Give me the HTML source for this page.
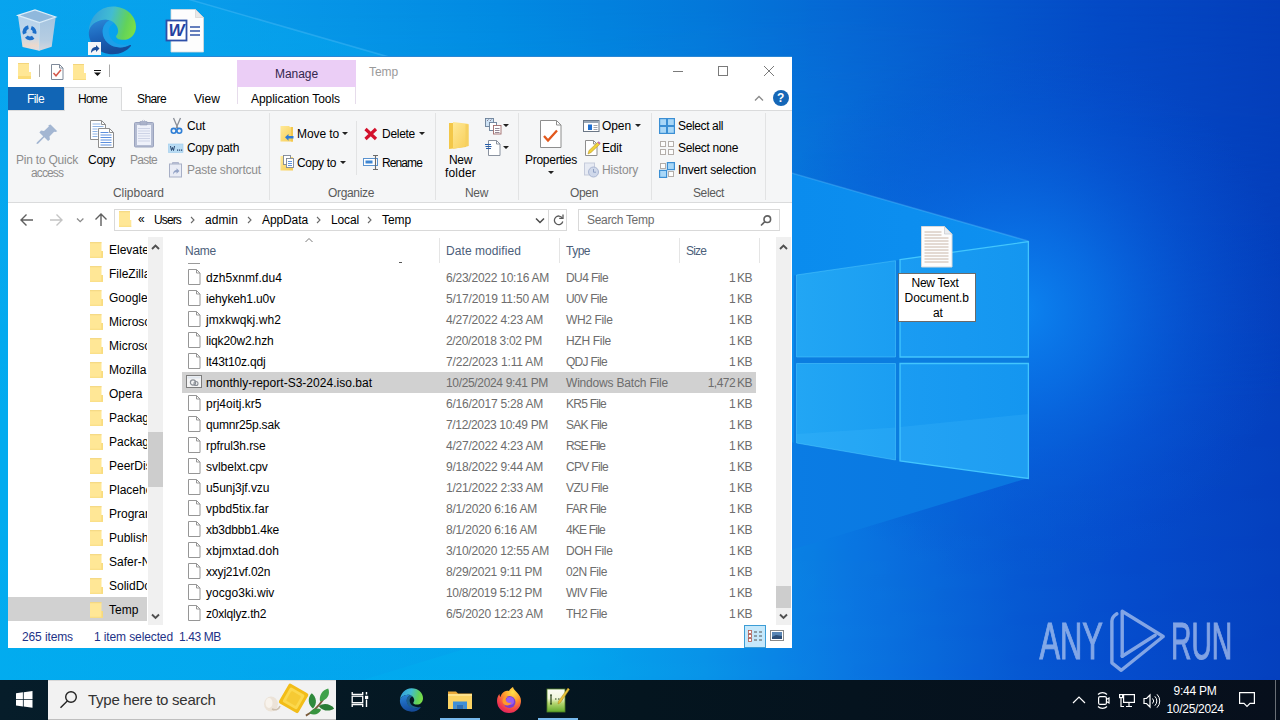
<!DOCTYPE html>
<html lang="en">
<head>
<meta charset="utf-8">
<title>Temp</title>
<style>
*{box-sizing:border-box;margin:0;padding:0}
html,body{width:1280px;height:720px;overflow:hidden}
body{font-family:"Liberation Sans",sans-serif;font-size:12px;color:#000;position:relative;background:#0a5fce}
.abs{position:absolute}
.t{position:absolute;white-space:pre;line-height:16px;height:16px}
#desk{position:absolute;left:0;top:0;width:1280px;height:720px}
#win{position:absolute;left:8px;top:57px;width:784px;height:591px;background:#fff;overflow:hidden}
#ribbon{position:absolute;left:0;top:53px;width:784px;height:93px;background:#f5f6f7;border-top:1px solid #dadbdc;border-bottom:1px solid #dadbdc}
.sep{position:absolute;width:1px;background:#e2e3e4;top:60px;height:81px}
.g{color:#8d8d8d}
.lbl{color:#5a5a5a}
#task{position:absolute;left:0;top:680px;width:1280px;height:40px;background:linear-gradient(90deg,#061d2a 0,#04151f 50%,#070f1c 100%)}
.row{position:absolute;left:174px;width:574px;height:21px}
.fi{position:absolute;left:6px;top:2px;width:13px;height:16px}
.nv{position:absolute;left:0;width:139px;height:24px;overflow:hidden}
</style>
</head>
<body>
<div id="desk">
<svg class="abs" style="left:0;top:0" width="1280" height="720" viewBox="0 0 1280 720">
<defs>
<linearGradient id="bg" x1="0" y1="0" x2="1280" y2="0" gradientUnits="userSpaceOnUse">
<stop offset="0" stop-color="#0aa0ee"/><stop offset=".16" stop-color="#0a9cea"/><stop offset=".39" stop-color="#028ae2"/><stop offset=".55" stop-color="#0478da"/><stop offset=".655" stop-color="#0668d4"/><stop offset=".78" stop-color="#0556cc"/><stop offset=".86" stop-color="#044ac6"/><stop offset="1" stop-color="#043eba"/>
</linearGradient>
<linearGradient id="bg2" x1="0" y1="0" x2="1280" y2="0" gradientUnits="userSpaceOnUse">
<stop offset="0" stop-color="#00aff0"/><stop offset=".43" stop-color="#02a8ee"/><stop offset=".55" stop-color="#0894e8"/><stop offset=".66" stop-color="#0a78e2"/><stop offset=".73" stop-color="#0868da"/><stop offset=".8" stop-color="#0658d2"/><stop offset=".88" stop-color="#054ccc"/><stop offset="1" stop-color="#0440be"/>
</linearGradient>
<linearGradient id="vm" x1="0" y1="0" x2="0" y2="720" gradientUnits="userSpaceOnUse">
<stop offset="0" stop-color="#fff" stop-opacity="0"/><stop offset=".1" stop-color="#fff" stop-opacity=".15"/><stop offset=".55" stop-color="#fff" stop-opacity=".9"/><stop offset="1" stop-color="#fff" stop-opacity="1"/>
</linearGradient>
<mask id="vmask"><rect width="1280" height="720" fill="url(#vm)"/></mask>
<linearGradient id="beam" x1="0" y1="0" x2="1280" y2="0" gradientUnits="userSpaceOnUse">
<stop offset="0" stop-color="#06a8ee" stop-opacity=".5"/><stop offset=".4" stop-color="#04a2ec" stop-opacity=".6"/><stop offset=".52" stop-color="#0698ea" stop-opacity=".9"/><stop offset=".62" stop-color="#0a8cee"/><stop offset=".8" stop-color="#0e90f0"/>
</linearGradient>
<linearGradient id="beam2" x1="0" y1="0" x2="1280" y2="0" gradientUnits="userSpaceOnUse">
<stop offset="0" stop-color="#04a8ee" stop-opacity=".5"/><stop offset=".4" stop-color="#04a0ec" stop-opacity=".6"/><stop offset=".52" stop-color="#0890e8" stop-opacity=".85"/><stop offset=".62" stop-color="#0a7ce4"/><stop offset=".8" stop-color="#0a76e0"/>
</linearGradient>
<radialGradient id="glow" cx="1020" cy="310" r="270" gradientUnits="userSpaceOnUse">
<stop offset="0" stop-color="#0c84f0" stop-opacity="1"/><stop offset=".3" stop-color="#0a74e8" stop-opacity=".75"/><stop offset=".65" stop-color="#0860dc" stop-opacity=".35"/><stop offset="1" stop-color="#0650d0" stop-opacity="0"/>
</radialGradient>
<linearGradient id="p1" x1="0" y1="0" x2="1" y2="0"><stop offset="0" stop-color="#22a6f4"/><stop offset="1" stop-color="#1b9ef2"/></linearGradient>
<linearGradient id="p2" x1="0" y1="0" x2="1" y2="0"><stop offset="0" stop-color="#1a9cf2"/><stop offset="1" stop-color="#1496f0"/></linearGradient>
</defs>
<rect width="1280" height="720" fill="url(#bg)"/>
<rect width="1280" height="720" fill="url(#bg2)" mask="url(#vmask)"/>
<rect x="600" width="680" height="720" fill="url(#glow)"/>
<polygon points="0,-55 1028,241 1028,478 0,323" fill="url(#beam)"/>
<polygon points="0,323 1028,478 0,790" fill="url(#beam2)"/>
<path d="M0-55L1028 241" stroke="#7fd4ff" stroke-opacity=".25" stroke-width="1.500"/>
<!-- panes -->
<polygon points="794,275.500 1029,241 1029,478.500 794,443" fill="#0b7de0"/>
<polygon points="796.500,275 895.500,260.700 895.500,357 796.500,357" fill="url(#p1)" stroke="#52ccff" stroke-width="1" stroke-opacity=".5"/>
<polygon points="900,259.600 1028.400,241.600 1028.400,357 900,357" fill="url(#p2)" stroke="#48ccff" stroke-width="1.300" stroke-opacity=".9"/>
<polygon points="796.500,363.500 895.500,363.500 895.500,460 796.500,443" fill="url(#p1)" stroke="#52ccff" stroke-width="1" stroke-opacity=".5"/>
<polygon points="900,363.500 1028.400,363.500 1028.400,478.500 900,461" fill="url(#p2)" stroke="#48ccff" stroke-width="1.300" stroke-opacity=".9"/>
<polygon points="796.500,434 895.500,427.500 895.500,460 796.500,443" fill="#4fc0ff" opacity=".18"/>
<polygon points="900,427 1028.400,414 1028.400,478.500 900,461" fill="#4fc0ff" opacity=".18"/>
</svg>

<!-- recycle bin -->
<svg class="abs" style="left:15px;top:7px" width="44" height="47" viewBox="15 7 44 47">
<defs><linearGradient id="rb1" x1="0" y1="0" x2="0" y2="1"><stop offset="0" stop-color="#b4d2ec"/><stop offset=".6" stop-color="#c4d8ea"/><stop offset=".85" stop-color="#ecd9cc"/><stop offset="1" stop-color="#d9dde6"/></linearGradient>
<linearGradient id="rb2" x1="0" y1="0" x2="0" y2="1"><stop offset="0" stop-color="#a4c4e0"/><stop offset=".7" stop-color="#b6cde2"/><stop offset="1" stop-color="#d6d6dc"/></linearGradient></defs>
<path d="M17.900 15.400L39.600 22.500l-.4 28.300L22.500 47z" fill="url(#rb1)"/>
<path d="M39.600 22.500L55.700 17l-4 29.700-12.500 4.100z" fill="url(#rb2)"/>
<path d="M17.900 15.400L35 10l20.700 7-16.100 5.500z" fill="#8fb8dc"/>
<path d="M17.900 15.400L35 10l20.700 7-16.100 5.500z" fill="none" stroke="#dcecf8" stroke-width="1.200"/>
<path d="M39.600 22.500l-.4 28.300" stroke="#dce8f4" stroke-width=".8" opacity=".8"/>
<g fill="none" stroke="#1c6fca" stroke-width="3.800"><path d="M24.800 33.800a4.800 4.800 0 0 1 3.600-6.600"/><path d="M31.200 27.800a4.800 4.800 0 0 1 3.200 5.800"/><path d="M33.200 37.200a4.800 4.800 0 0 1-6.800-.6"/></g>
</svg>
<!-- edge shortcut -->
<svg class="abs" style="left:88px;top:6px" width="49" height="49" viewBox="0 0 48.500 48.500">
<path d="M.8 26.500C.8 12 11 .5 24.500 .5 38 .5 47.500 10 47.500 20.500c0 7.500-5.500 13-12.500 13-5 0-7.200-2-7.200-3.300 0-1.200 2-2 2-5.700C29.800 19 24.500 13.500 17 13.500 8 13.500.8 20 .8 26.500z" fill="url(#eg1)"/>
<path d="M.8 26.500C.8 20 8 13.500 17 13.500c2 0 3.500.3 4.500.7-4 1.800-7 6.300-7 11.300C14.500 34 22 41 32 41c3.500 0 6.800-.8 9.500-2.400.8-.4 1.500.4 1 1.100-4 5.100-10.500 8.100-18 8.100C11 47.800.8 38 .8 26.500z" fill="url(#eg2)"/>
<path d="M14.500 25.500c0-5 3-9.500 7-11.300 1.500.6 3 1.600 4 2.800-3 1.500-5 4.500-5 8 0 7 6 13.500 15 13.500 2 0 4-.3 5.800-1-2.800 2.200-6 3.500-9.800 3.500-10 0-17-7-17-15.500z" fill="#2f9ce6" opacity=".55"/>
</svg>
<svg class="abs" style="left:88px;top:42px" width="13" height="13" viewBox="0 0 13 13"><rect width="13" height="13" fill="#f4f6f8"/><path d="M3 11c0-4 2-6 5-6V3l3.500 3.500L8 10V8c-2 0-3.500 1-5 3z" fill="#1c4f9c"/></svg>
<!-- word doc -->
<svg class="abs" style="left:165px;top:8px" width="41" height="46" viewBox="0 0 41 46">
<path d="M6 1.500h24.500l8 8V44H6z" fill="#fdfdfd" stroke="#d9d9d9" stroke-width=".8"/>
<path d="M30.500 1.500v8h8z" fill="#e8e8e8" stroke="#cfcfcf" stroke-width=".6"/>
<path d="M25 19h10M25 23h10M25 27h10" stroke="#3356a8" stroke-width="1.300"/>
<rect x="1.500" y="12.500" width="20" height="20" fill="#fff" stroke="#2d4fa8" stroke-width="1.800"/>
</svg>
<div class="t" style="left:167px;top:20px;width:19px;height:22px;line-height:22px;font-size:17px;font-weight:bold;font-style:italic;color:#2541a0;text-align:center">W</div>
<!-- new text document.bat -->
<svg class="abs" style="left:921px;top:226px" width="32" height="42" viewBox="0 0 32 42">
<path d="M.5.500h23l7.500 7.500v33H.5z" fill="#fdfdfd" stroke="#d5d9de" stroke-width="1"/>
<path d="M23.500.500v7.500h7.500z" fill="#e9ecef" stroke="#c9cdd2" stroke-width=".8"/>
<path d="M3.500 6h17M3.500 9h17M3.500 12h24M3.500 15h24M3.500 18h24M3.500 21h24M3.500 24h24M3.500 27h24M3.500 30h24M3.500 33h24M3.500 36h24" stroke="#c9b6a8" stroke-width="1"/>
</svg>
<div class="abs" style="left:898px;top:273px;width:78px;height:49px;background:#fff;border:1px solid #6a6a6a"></div>
<div class="t" style="letter-spacing:-0.268px;left:911.500px;top:275px;line-height:16px">New Text</div>
<div class="t" style="letter-spacing:-0.020px;left:904.500px;top:290px;line-height:16px">Document.b</div>
<div class="t" style="letter-spacing:-0.258px;left:933px;top:305px;line-height:16px">at</div>
<!-- watermark -->
<svg class="abs" style="left:1030px;top:600px" width="220" height="80" viewBox="0 0 220 80">
<g opacity=".62">
<g fill="#cfdcf6" stroke="#cfdcf6" stroke-width="1.100" font-family="'Liberation Sans',sans-serif" font-size="51">
<text transform="translate(9.500 59) scale(.605 1)">ANY</text>
<text transform="translate(141 59) scale(.555 1)">RUN</text>
</g>
<g fill="none" stroke="#cfdcf6" stroke-width="3.400" stroke-linejoin="round" stroke-linecap="round">
<path d="M92.200 56.200V11.300l41 25.200-41.900 33.800-9.400-7.500V21q0-4 5-7.200"/><path d="M92.200 56.200l33-21"/>
</g>
</g>
</svg>
</div>

<div id="wtop" class="abs" style="left:8px;top:56px;width:784px;height:1px;background:#2b86d4"></div>
<div id="win"><div id="wc" class="abs" style="left:-8px;top:-57px;width:1280px;height:720px">
<!-- title bar -->
<div class="abs" style="left:237px;top:60px;width:119px;height:27px;background:#ebcef6"></div>
<div class="t" style="letter-spacing:-0.062px;left:275px;top:66px;color:#33264d">Manage</div>
<div class="t" style="letter-spacing:-0.086px;left:369px;top:64px;color:#9a9a9a">Temp</div>
<svg class="abs" style="left:8px;top:57px" width="120" height="30" viewBox="8 57 120 30">
<path d="M18 63h11v9h2v7H18z" fill="#ffe796"/><path d="M18 63h11v1H18z" fill="#f3d57c"/><path d="M18 76h13v3H18z" fill="#fbdc78"/>
<path d="M39.500 64.500v12.500M109.500 64.500v12.500" stroke="#a8a8a8" stroke-width="1"/>
<path d="M51.500 64.500h8l3.500 3.500v11.500h-11.500z" fill="#fff" stroke="#7f8a9a"/><path d="M59.500 64.500v3.500h3.500" fill="none" stroke="#7f8a9a"/>
<path d="M53.500 73l2.500 2.800 5-6" stroke="#d4574a" stroke-width="1.500" fill="none"/>
<path d="M73 64h11v9h2v7H73z" fill="#ffe796"/><path d="M73 64h11v1H73z" fill="#f3d57c"/><path d="M73 79h13v1H73z" fill="#f9dc80"/>
<path d="M94 70.500h7" stroke="#111" stroke-width="1"/><path d="M94 72.500h7l-3.500 3.500z" fill="#111"/>
</svg>

<!-- window controls -->
<svg class="abs" style="left:660px;top:57px" width="132" height="30" viewBox="0 0 132 30" fill="none" stroke="#7a7a7a" stroke-width="1">
<path d="M13 14.500h10"/><rect x="58.500" y="9.500" width="9" height="9"/><path d="M104 9l10 10M114 9l-10 10"/>
</svg>
<!-- tabs -->
<div class="abs" style="left:8px;top:87px;width:56px;height:23px;background:#1165b5"></div>
<div class="t" style="letter-spacing:-0.586px;left:27px;top:91px;color:#fff">File</div>
<div class="abs" style="left:64px;top:87px;width:58px;height:24px;background:#f5f6f7;border:1px solid #dadbdc;border-bottom:none;z-index:3"></div>
<div class="t" style="letter-spacing:-0.754px;left:78px;top:91px;z-index:4">Home</div>
<div class="t" style="letter-spacing:-0.606px;left:137px;top:91px">Share</div>
<div class="t" style="letter-spacing:0.051px;left:194px;top:91px">View</div>
<div class="abs" style="left:237px;top:87px;width:119px;height:17px;border-left:1px solid #e6dceb;border-right:1px solid #e6dceb"></div>
<div class="t" style="letter-spacing:-0.050px;left:251px;top:91px">Application Tools</div>
<svg class="abs" style="left:752px;top:88px" width="40" height="20" viewBox="0 0 40 20">
<path d="M3 12.500l4-4 4 4" fill="none" stroke="#8a8a8a" stroke-width="1.300"/>
<circle cx="29" cy="10" r="8" fill="#1667b7"/>
</svg>
<div class="t" style="left:777px;top:90px;color:#fff;font-weight:bold;font-size:12px">?</div>
<div id="ribbon" style="left:8px;top:110px"></div>
<!-- ribbon group separators -->
<div class="sep" style="left:269px;top:113px;height:87px"></div>
<div class="sep" style="left:435px;top:113px;height:87px"></div>
<div class="sep" style="left:518px;top:113px;height:87px"></div>
<div class="sep" style="left:651px;top:113px;height:87px"></div>
<div class="sep" style="left:765px;top:113px;height:87px"></div>
<div class="sep" style="left:356px;top:121px;height:54px"></div>
<!-- group labels -->
<div class="t lbl" style="letter-spacing:-0.042px;left:113px;top:185px">Clipboard</div>
<div class="t lbl" style="letter-spacing:-0.338px;left:328px;top:185px">Organize</div>
<div class="t lbl" style="letter-spacing:-0.339px;left:465px;top:185px">New</div>
<div class="t lbl" style="letter-spacing:-0.340px;left:570px;top:185px">Open</div>
<div class="t lbl" style="letter-spacing:-0.393px;left:693px;top:185px">Select</div>
<!-- clipboard -->
<div class="t g" style="letter-spacing:-0.225px;left:16px;top:152px">Pin to Quick</div>
<div class="t g" style="letter-spacing:-0.893px;left:31px;top:165px">access</div>
<div class="t" style="letter-spacing:-0.254px;left:88px;top:152px">Copy</div>
<div class="t g" style="letter-spacing:-0.738px;left:130px;top:152px">Paste</div>
<div class="t" style="letter-spacing:-0.229px;left:187px;top:118px">Cut</div>
<div class="t" style="letter-spacing:-0.300px;left:187px;top:140px">Copy path</div>
<div class="t g" style="letter-spacing:-0.194px;left:187px;top:162px">Paste shortcut</div>
<!-- organize -->
<div class="t" style="letter-spacing:-0.098px;left:297px;top:126px">Move to</div>
<div class="t" style="letter-spacing:-0.337px;left:297px;top:155px">Copy to</div>
<div class="t" style="letter-spacing:-0.281px;left:382px;top:126px">Delete</div>
<div class="t" style="letter-spacing:-0.893px;left:382px;top:155px">Rename</div>
<!-- new -->
<div class="t" style="letter-spacing:-0.339px;left:449px;top:152px">New</div>
<div class="t" style="letter-spacing:0.161px;left:445px;top:165px">folder</div>
<!-- open -->
<div class="t" style="letter-spacing:-0.270px;left:525px;top:152px">Properties</div>
<div class="t" style="letter-spacing:-0.090px;left:602px;top:118px">Open</div>
<div class="t" style="letter-spacing:-0.172px;left:602px;top:140px">Edit</div>
<div class="t g" style="letter-spacing:-0.192px;left:602px;top:162px">History</div>
<!-- select -->
<div class="t" style="letter-spacing:-0.370px;left:678px;top:118px">Select all</div>
<div class="t" style="letter-spacing:-0.308px;left:678px;top:140px">Select none</div>
<div class="t" style="letter-spacing:-0.170px;left:678px;top:162px">Invert selection</div>
<!-- dropdown arrows -->
<svg class="abs" style="left:0;top:0" width="800" height="210" viewBox="0 0 800 210" fill="#222">
<path d="M342 132h6l-3 3zM340 161h6l-3 3zM419 132h6l-3 3zM503 124h6l-3 3zM503 146h6l-3 3zM548 171h6l-3 3zM635 124h6l-3 3z"/>
</svg>
<svg class="abs" style="left:0;top:0" width="800" height="210" viewBox="0 0 800 210">
<defs>
<linearGradient id="fo1" x1="0" y1="0" x2="1" y2="1"><stop offset="0" stop-color="#ffe998"/><stop offset="1" stop-color="#f7cd55"/></linearGradient>
</defs>
<!-- pin -->
<g fill="#a3b6d2"><path d="M50.500 124.500l6.800 6.800-2 .8-1.200-.4-4.600 4.800.4 3-1.800 1.600-3.800-3.800-6.300 6.400-1.500.3.300-1.500 6.400-6.300-3.800-3.800 1.600-1.800 3 .4 4.800-4.600-.4-1.200z"/></g>
<!-- copy -->
<g stroke="#8e8e8e" stroke-width="1" fill="#fff"><path d="M90.500 120.500h11l4 4v15h-15z"/><path d="M101.500 120.500v4h4" fill="none"/><path d="M98.500 128.500h11l4 4v15h-15z"/><path d="M109.500 128.500v4h4" fill="none"/></g>
<path d="M92.500 124h8M92.500 126.500h11M92.500 129h5M92.500 131.500h5M92.500 134h5M92.500 136.500h5" stroke="#8fb4e6" stroke-width="1"/>
<path d="M100.500 132.500h8M100.500 135h11M100.500 137.500h11M100.500 140h11M100.500 142.500h11M100.500 145h11" stroke="#5b8ede" stroke-width="1"/>
<!-- paste (disabled) -->
<rect x="134.500" y="122.500" width="19" height="24.500" rx="1" fill="#b4bcd2" stroke="#9aa3be"/>
<rect x="137" y="125" width="14" height="20" fill="#eef1fa"/>
<path d="M138 128.500h12M138 131h12M138 133.500h12M138 136h12M138 138.500h12M138 141h12" stroke="#cdd3e6" stroke-width="1"/>
<path d="M140 125v-3.500h1.800a1.900 2.300 0 0 1 3.400 0h1.800v3.500z" fill="#aab2ca" stroke="#949db8" stroke-width=".6"/><circle cx="143.500" cy="120.300" r=".8" fill="#f5f6f7"/>
<!-- cut -->
<path d="M173.500 118l4.500 10.500M180.500 118l-4.500 10.500" stroke="#8a8f98" stroke-width="1.300" fill="none"/>
<circle cx="173.700" cy="130.800" r="2.400" fill="none" stroke="#2f7fd6" stroke-width="1.600"/><circle cx="179.300" cy="130.800" r="2.400" fill="none" stroke="#2f7fd6" stroke-width="1.600"/>
<!-- copy path -->
<rect x="168.500" y="144" width="14.500" height="8.500" fill="#b9dcf4" stroke="#9ccbed" stroke-width=".6"/>
<path d="M170.500 146l1 4.500 1-3 1 3 1-4.500" stroke="#26456e" stroke-width="1" fill="none"/><path d="M177 150.200h1.200M179 150.200h1.200M181 150.200h1.200" stroke="#26456e" stroke-width="1.200"/>
<!-- paste shortcut (disabled) -->
<rect x="169.500" y="164" width="12" height="13" fill="#e9ecf5" stroke="#a7afc6"/><path d="M172.500 164v-1.500h6v1.500" fill="#b4bcd2" stroke="#a7afc6" stroke-width=".8"/>
<path d="M173 174.500c0-3 1.500-4.500 3.500-4.500v-1.800l3 2.800-3 2.800v-1.800c-1.500 0-2.500.8-3.500 2.500z" fill="#93a3c6"/>
<!-- move to -->
<path d="M280.500 126h9v1h3.500v14.500h-12.500z" fill="url(#fo1)"/><path d="M291 127h2v14.500h-2z" fill="#f3c84e"/>
<path d="M293.500 138.500h-5v2.200l-3.500-3.400 3.500-3.400v2.200h5z" fill="#2e7bd6"/>
<!-- copy to -->
<path d="M280.500 156h9v1h3.500v13.500h-12.500z" fill="url(#fo1)"/>
<g fill="#fff" stroke="#7d8694" stroke-width=".9"><rect x="283.500" y="155.500" width="7" height="9"/><rect x="286.500" y="158.500" width="7" height="9"/></g>
<path d="M288 161.500h4M288 163.500h4M288 165.500h4" stroke="#4e86d6" stroke-width=".9"/>
<!-- delete -->
<path d="M365.500 129l10.500 10M376 129l-10.500 10" stroke="#d3112c" stroke-width="3.200" fill="none"/>
<!-- rename -->
<rect x="363.500" y="158.500" width="14" height="7" fill="#fff" stroke="#5a93d0"/><rect x="365.500" y="160.500" width="7" height="3" fill="#3f86d2"/>
<path d="M375.500 155.500v14M373 155.500h5M373 169.500h5" stroke="#6a6a6a" stroke-width="1.100" fill="none"/>
<!-- new folder -->
<path d="M449 123h8l1.500 2.500H466V147l-17 2z" fill="#f3c748"/>
<path d="M453 122l12.500 1.500 3 .5V146l-15.500 3z" fill="url(#fo1)"/>
<path d="M465.500 124l3 .5V146l-3 .6z" fill="#f5d061"/>
<!-- new item -->
<g stroke="#6b7f98" stroke-width=".9"><rect x="485.500" y="118.500" width="8" height="8" fill="#cfe3f5"/><rect x="489.500" y="122.500" width="7" height="8" fill="#fff"/><rect x="493.500" y="125.500" width="7.500" height="8.500" fill="#fff" stroke="#a06a6a"/></g>
<path d="M487 121l1.500-1.500M490 121l1.500-1.500M495 128.500h4.500M495 130.500h4.500M495 132.500h4.500" stroke="#7a6a7a" stroke-width=".8"/>
<!-- easy access -->
<path d="M488.500 140.500h8l3.500 3.500v11.500h-11.500z" fill="#fff" stroke="#7d8694" stroke-width=".9"/><path d="M496.500 140.500v3.500h3.500" fill="none" stroke="#7d8694" stroke-width=".9"/>
<path d="M485 144.500h6M485.500 146.500h6M486 148.500h5" stroke="#2a5ea8" stroke-width="1.100"/>
<!-- properties -->
<path d="M540.500 120.500h16l4.500 4.500v22.500h-20.500z" fill="#fff" stroke="#8e8e8e"/><path d="M556.500 120.500v4.500h4.500" fill="none" stroke="#8e8e8e"/>
<path d="M544 136l4 4.500 9-10" stroke="#e2581c" stroke-width="2.300" fill="none"/>
<!-- open -->
<rect x="583.500" y="120.500" width="15.500" height="11" fill="#fff" stroke="#6b7786"/><rect x="584" y="121" width="14.500" height="2" fill="#9aa7b6"/>
<rect x="588" y="124.500" width="4" height="5.500" fill="#1e6fd0"/><path d="M593.500 125.500h4M593.500 127.500h4M593.500 129.500h4" stroke="#8a8f98" stroke-width=".8"/>
<!-- edit -->
<path d="M585.500 140.500h8l3.500 3.500v11.500h-11.500z" fill="#fff" stroke="#8e8e8e"/><path d="M593.500 140.500v3.500h3.500" fill="none" stroke="#8e8e8e"/>
<path d="M588 154l1-3.500 8.500-8 2 2-8.500 8z" fill="#f0d23a" stroke="#b8962a" stroke-width=".6"/><path d="M597.500 142.500l1.200-1.200 2 2-1.200 1.200z" fill="#c46ab0"/>
<!-- history (disabled) -->
<rect x="584.500" y="163" width="10" height="12" fill="#e6eaf3" stroke="#c5cbdb"/><circle cx="593.500" cy="172" r="5" fill="#cfd8ea" stroke="#aab6d2"/><path d="M593.500 169v3.200h2.500" stroke="#8fa0c4" stroke-width="1" fill="none"/>
<!-- select all -->
<g fill="#a9d7f7" stroke="#3b8fd4" stroke-width="1.200"><rect x="659.600" y="118.600" width="7" height="7"/><rect x="667.400" y="118.600" width="7" height="7"/><rect x="659.600" y="126.400" width="7" height="7"/><rect x="667.400" y="126.400" width="7" height="7"/></g>
<!-- select none -->
<g fill="#fdfdfd" stroke="#b3aeaa" stroke-width="1"><rect x="660.500" y="141.500" width="5" height="5"/><rect x="668.500" y="141.500" width="5" height="5"/><rect x="660.500" y="149.500" width="5" height="5"/><rect x="668.500" y="149.500" width="5" height="5"/></g>
<!-- invert -->
<g fill="#fdfdfd" stroke="#b3aeaa" stroke-width="1"><rect x="660.500" y="163.500" width="5" height="5"/><rect x="668.500" y="171.500" width="5" height="5"/></g>
<g fill="#a9d7f7" stroke="#3b8fd4" stroke-width="1.200"><rect x="667.400" y="162.600" width="7" height="7"/><rect x="659.600" y="170.400" width="7" height="7"/></g>
</svg>


<!-- nav buttons -->
<svg class="abs" style="left:8px;top:204px" width="110" height="32" viewBox="0 0 110 32" fill="none">
<path d="M25 16H13.500M18.500 10.500l-5.500 5.500 5.500 5.500" stroke="#5f5f5f" stroke-width="1.400"/>
<path d="M42 16h11.500M48.500 10.500l5.500 5.500-5.500 5.500" stroke="#c4c4c4" stroke-width="1.400"/>
<path d="M69 14.500l3.200 3.200 3.200-3.200" stroke="#8a8a8a" stroke-width="1.300"/>
<path d="M93 22V10.500M87.500 15.500l5.500-5.500 5.500 5.500" stroke="#5f5f5f" stroke-width="1.400"/>
</svg>
<div class="abs" style="left:114px;top:209px;width:435px;height:22px;border:1px solid #d9d9d9"></div>
<div class="abs" style="left:548px;top:209px;width:19px;height:22px;border:1px solid #d9d9d9"></div>
<div class="abs" style="left:578px;top:209px;width:202px;height:22px;border:1px solid #d9d9d9"></div>
<svg class="abs" style="left:118px;top:211px" width="14" height="16" viewBox="0 0 14 16"><path d="M1 .2h11v8.800h1.300v6.800H1z" fill="#ffe796"/><path d="M1 .2h11v1H1z" fill="#f3d57c"/><path d="M1 14.800h12.300v1H1z" fill="#f9dc80"/></svg>
<div class="t" style="left:138px;top:211px;font-size:12px;letter-spacing:-1px">«</div>
<div class="t" style="letter-spacing:-0.869px;left:154px;top:212px">Users</div>
<div class="t" style="letter-spacing:0.062px;left:205px;top:212px">admin</div>
<div class="t" style="letter-spacing:-0.100px;left:262px;top:212px">AppData</div>
<div class="t" style="letter-spacing:-0.138px;left:331px;top:212px">Local</div>
<div class="t" style="letter-spacing:-0.086px;left:382px;top:212px">Temp</div>
<svg class="abs" style="left:185px;top:214px" width="200" height="12" viewBox="0 0 200 12" fill="none" stroke="#6a6a6a" stroke-width="1.100">
<path d="M6 3l3 3-3 3M63 3l3 3-3 3M132 3l3 3-3 3M183 3l3 3-3 3"/>
</svg>
<svg class="abs" style="left:530px;top:210px" width="40" height="20" viewBox="0 0 40 20" fill="none">
<path d="M6 8.500l4 4 4-4" stroke="#4a4a4a" stroke-width="1.500"/>
<path d="M32.300 8a4.300 4.300 0 1 0 .5 3.500" stroke="#5a5a5a" stroke-width="1.300"/>
<path d="M33 4.500v3.800h-3.800" stroke="#5a5a5a" stroke-width="1.300"/>
</svg>
<div class="t" style="letter-spacing:-0.317px;left:587px;top:212px;color:#6d6d6d">Search Temp</div>
<svg class="abs" style="left:758px;top:213px" width="16" height="16" viewBox="0 0 16 16" fill="none" stroke="#606060" stroke-width="1.600"><circle cx="9.300" cy="6.200" r="3.300"/><path d="M7 8.500L3 12.500"/></svg>

<!-- nav pane -->
<div class="abs" style="left:8px;top:597px;width:139px;height:24px;background:#d1d1d1"></div>
<div class="abs" style="left:8px;top:237px;width:139px;height:388px;overflow:hidden">
<svg class="abs" style="left:81px;top:5px" width="14" height="16" viewBox="0 0 14 16"><path d="M1 .2h11.500v8.800h1.300v6.800H1z" fill="#ffe796"/><path d="M1 .2h11.500v1H1z" fill="#f3d57c"/><path d="M12.500 9h1.300v6.800h-1.300z" fill="#f7d875"/><path d="M1 14.800h12.800v1H1z" fill="#f9dc80"/></svg>
<div class="t" style="left:101px;top:5px">Elevate</div>
<svg class="abs" style="left:81px;top:29px" width="14" height="16" viewBox="0 0 14 16"><path d="M1 .2h11.500v8.800h1.300v6.800H1z" fill="#ffe796"/><path d="M1 .2h11.500v1H1z" fill="#f3d57c"/><path d="M12.500 9h1.300v6.800h-1.300z" fill="#f7d875"/><path d="M1 14.800h12.800v1H1z" fill="#f9dc80"/></svg>
<div class="t" style="left:101px;top:29px">FileZilla</div>
<svg class="abs" style="left:81px;top:53px" width="14" height="16" viewBox="0 0 14 16"><path d="M1 .2h11.500v8.800h1.300v6.800H1z" fill="#ffe796"/><path d="M1 .2h11.500v1H1z" fill="#f3d57c"/><path d="M12.500 9h1.300v6.800h-1.300z" fill="#f7d875"/><path d="M1 14.800h12.800v1H1z" fill="#f9dc80"/></svg>
<div class="t" style="left:101px;top:53px">Google</div>
<svg class="abs" style="left:81px;top:77px" width="14" height="16" viewBox="0 0 14 16"><path d="M1 .2h11.500v8.800h1.300v6.800H1z" fill="#ffe796"/><path d="M1 .2h11.500v1H1z" fill="#f3d57c"/><path d="M12.500 9h1.300v6.800h-1.300z" fill="#f7d875"/><path d="M1 14.800h12.800v1H1z" fill="#f9dc80"/></svg>
<div class="t" style="left:101px;top:77px">Microso</div>
<svg class="abs" style="left:81px;top:101px" width="14" height="16" viewBox="0 0 14 16"><path d="M1 .2h11.500v8.800h1.300v6.800H1z" fill="#ffe796"/><path d="M1 .2h11.500v1H1z" fill="#f3d57c"/><path d="M12.500 9h1.300v6.800h-1.300z" fill="#f7d875"/><path d="M1 14.800h12.800v1H1z" fill="#f9dc80"/></svg>
<div class="t" style="left:101px;top:101px">Microso</div>
<svg class="abs" style="left:81px;top:125px" width="14" height="16" viewBox="0 0 14 16"><path d="M1 .2h11.500v8.800h1.300v6.800H1z" fill="#ffe796"/><path d="M1 .2h11.500v1H1z" fill="#f3d57c"/><path d="M12.500 9h1.300v6.800h-1.300z" fill="#f7d875"/><path d="M1 14.800h12.800v1H1z" fill="#f9dc80"/></svg>
<div class="t" style="left:101px;top:125px">Mozilla</div>
<svg class="abs" style="left:81px;top:149px" width="14" height="16" viewBox="0 0 14 16"><path d="M1 .2h11.500v8.800h1.300v6.800H1z" fill="#ffe796"/><path d="M1 .2h11.500v1H1z" fill="#f3d57c"/><path d="M12.500 9h1.300v6.800h-1.300z" fill="#f7d875"/><path d="M1 14.800h12.800v1H1z" fill="#f9dc80"/></svg>
<div class="t" style="left:101px;top:149px">Opera</div>
<svg class="abs" style="left:81px;top:173px" width="14" height="16" viewBox="0 0 14 16"><path d="M1 .2h11.500v8.800h1.300v6.800H1z" fill="#ffe796"/><path d="M1 .2h11.500v1H1z" fill="#f3d57c"/><path d="M12.500 9h1.300v6.800h-1.300z" fill="#f7d875"/><path d="M1 14.800h12.800v1H1z" fill="#f9dc80"/></svg>
<div class="t" style="left:101px;top:173px">Packag</div>
<svg class="abs" style="left:81px;top:197px" width="14" height="16" viewBox="0 0 14 16"><path d="M1 .2h11.500v8.800h1.300v6.800H1z" fill="#ffe796"/><path d="M1 .2h11.500v1H1z" fill="#f3d57c"/><path d="M12.500 9h1.300v6.800h-1.300z" fill="#f7d875"/><path d="M1 14.800h12.800v1H1z" fill="#f9dc80"/></svg>
<div class="t" style="left:101px;top:197px">Packag</div>
<svg class="abs" style="left:81px;top:221px" width="14" height="16" viewBox="0 0 14 16"><path d="M1 .2h11.500v8.800h1.300v6.800H1z" fill="#ffe796"/><path d="M1 .2h11.500v1H1z" fill="#f3d57c"/><path d="M12.500 9h1.300v6.800h-1.300z" fill="#f7d875"/><path d="M1 14.800h12.800v1H1z" fill="#f9dc80"/></svg>
<div class="t" style="left:101px;top:221px">PeerDis</div>
<svg class="abs" style="left:81px;top:245px" width="14" height="16" viewBox="0 0 14 16"><path d="M1 .2h11.500v8.800h1.300v6.800H1z" fill="#ffe796"/><path d="M1 .2h11.500v1H1z" fill="#f3d57c"/><path d="M12.500 9h1.300v6.800h-1.300z" fill="#f7d875"/><path d="M1 14.800h12.800v1H1z" fill="#f9dc80"/></svg>
<div class="t" style="left:101px;top:245px">Placeho</div>
<svg class="abs" style="left:81px;top:269px" width="14" height="16" viewBox="0 0 14 16"><path d="M1 .2h11.500v8.800h1.300v6.800H1z" fill="#ffe796"/><path d="M1 .2h11.500v1H1z" fill="#f3d57c"/><path d="M12.500 9h1.300v6.800h-1.300z" fill="#f7d875"/><path d="M1 14.800h12.800v1H1z" fill="#f9dc80"/></svg>
<div class="t" style="left:101px;top:269px">Program</div>
<svg class="abs" style="left:81px;top:293px" width="14" height="16" viewBox="0 0 14 16"><path d="M1 .2h11.500v8.800h1.300v6.800H1z" fill="#ffe796"/><path d="M1 .2h11.500v1H1z" fill="#f3d57c"/><path d="M12.500 9h1.300v6.800h-1.300z" fill="#f7d875"/><path d="M1 14.800h12.800v1H1z" fill="#f9dc80"/></svg>
<div class="t" style="left:101px;top:293px">Publish</div>
<svg class="abs" style="left:81px;top:317px" width="14" height="16" viewBox="0 0 14 16"><path d="M1 .2h11.500v8.800h1.300v6.800H1z" fill="#ffe796"/><path d="M1 .2h11.500v1H1z" fill="#f3d57c"/><path d="M12.500 9h1.300v6.800h-1.300z" fill="#f7d875"/><path d="M1 14.800h12.800v1H1z" fill="#f9dc80"/></svg>
<div class="t" style="left:101px;top:317px">Safer-N</div>
<svg class="abs" style="left:81px;top:341px" width="14" height="16" viewBox="0 0 14 16"><path d="M1 .2h11.500v8.800h1.300v6.800H1z" fill="#ffe796"/><path d="M1 .2h11.500v1H1z" fill="#f3d57c"/><path d="M12.500 9h1.300v6.800h-1.300z" fill="#f7d875"/><path d="M1 14.800h12.800v1H1z" fill="#f9dc80"/></svg>
<div class="t" style="left:101px;top:341px">SolidDo</div>
<svg class="abs" style="left:81px;top:365px" width="14" height="16" viewBox="0 0 14 16"><path d="M1 .2h11.500v8.800h1.300v6.800H1z" fill="#ffe796"/><path d="M1 .2h11.500v1H1z" fill="#f3d57c"/><path d="M12.500 9h1.300v6.800h-1.300z" fill="#f7d875"/><path d="M1 14.800h12.800v1H1z" fill="#f9dc80"/></svg>
<div class="t" style="left:101px;top:365px">Temp</div>
</div>
<div class="abs" style="left:148px;top:237px;width:15px;height:388px;background:#f0f0f0"></div>
<div class="abs" style="left:148px;top:432px;width:15px;height:55px;background:#cdcdcd"></div>
<svg class="abs" style="left:148px;top:237px" width="15" height="388" viewBox="0 0 15 388" fill="none" stroke="#505050" stroke-width="1.900"><path d="M4 12l3.500-3.500 3.500 3.500M4 377.500l3.500 3.500 3.500-3.500"/></svg>

<!-- file list -->
<div class="t" style="letter-spacing:-0.254px;left:185px;top:243px;color:#4c607a">Name</div>
<div class="t" style="letter-spacing:0.073px;left:446px;top:243px;color:#4c607a">Date modified</div>
<div class="t" style="letter-spacing:-0.504px;left:566px;top:243px;color:#4c607a">Type</div>
<div class="t" style="letter-spacing:-0.836px;left:686px;top:243px;color:#4c607a">Size</div>
<div class="abs" style="left:439px;top:238px;width:1px;height:25px;background:#e5e5e5"></div>
<div class="abs" style="left:559px;top:238px;width:1px;height:25px;background:#e5e5e5"></div>
<div class="abs" style="left:679px;top:238px;width:1px;height:25px;background:#e5e5e5"></div>
<div class="abs" style="left:759px;top:238px;width:1px;height:25px;background:#e5e5e5"></div>
<svg class="abs" style="left:304px;top:237px" width="10" height="6" viewBox="0 0 10 6" fill="none" stroke="#7a7a7a" stroke-width="1"><path d="M1.500 5l3.500-3.500 3.500 3.500"/></svg>
<div class="abs" style="left:188px;top:263px;width:12px;height:1px;background:#9a9a9a"></div>
<div class="abs" style="left:399px;top:262px;width:3px;height:1px;background:#555"></div>
<div class="abs" style="left:182px;top:372px;width:574px;height:21px;background:#d1d1d1"></div>
<svg class="abs" style="left:188px;top:269px" width="13" height="16" viewBox="0 0 13 16"><path d="M.5.500h8l3.500 3.500v11.500H.5z" fill="#fff" stroke="#969696"/><path d="M8.500.500v3.500h3.500" fill="none" stroke="#969696"/></svg>
<div class="t" style="letter-spacing:0.051px;left:206px;top:270px">dzh5xnmf.du4</div>
<div class="t" style="letter-spacing:-0.246px;left:446px;top:270px;color:#6d6d6d">6/23/2022 10:16 AM</div>
<div class="t" style="letter-spacing:-0.586px;left:566px;top:270px;color:#6d6d6d">DU4 File</div>
<div class="t" style="left:652px;width:100px;text-align:right;letter-spacing:-.5px;word-spacing:-1px;top:270px;color:#6d6d6d">1 KB</div>
<svg class="abs" style="left:188px;top:290px" width="13" height="16" viewBox="0 0 13 16"><path d="M.5.500h8l3.500 3.500v11.500H.5z" fill="#fff" stroke="#969696"/><path d="M8.500.500v3.500h3.500" fill="none" stroke="#969696"/></svg>
<div class="t" style="letter-spacing:-0.143px;left:206px;top:291px">iehykeh1.u0v</div>
<div class="t" style="letter-spacing:-0.196px;left:446px;top:291px;color:#6d6d6d">5/17/2019 11:50 AM</div>
<div class="t" style="letter-spacing:-0.627px;left:566px;top:291px;color:#6d6d6d">U0V File</div>
<div class="t" style="left:652px;width:100px;text-align:right;letter-spacing:-.5px;word-spacing:-1px;top:291px;color:#6d6d6d">1 KB</div>
<svg class="abs" style="left:188px;top:311px" width="13" height="16" viewBox="0 0 13 16"><path d="M.5.500h8l3.500 3.500v11.500H.5z" fill="#fff" stroke="#969696"/><path d="M8.500.500v3.500h3.500" fill="none" stroke="#969696"/></svg>
<div class="t" style="letter-spacing:0.082px;left:206px;top:312px">jmxkwqkj.wh2</div>
<div class="t" style="letter-spacing:-0.221px;left:446px;top:312px;color:#6d6d6d">4/27/2022 4:23 AM</div>
<div class="t" style="letter-spacing:-0.355px;left:566px;top:312px;color:#6d6d6d">WH2 File</div>
<div class="t" style="left:652px;width:100px;text-align:right;letter-spacing:-.5px;word-spacing:-1px;top:312px;color:#6d6d6d">1 KB</div>
<svg class="abs" style="left:188px;top:332px" width="13" height="16" viewBox="0 0 13 16"><path d="M.5.500h8l3.500 3.500v11.500H.5z" fill="#fff" stroke="#969696"/><path d="M8.500.500v3.500h3.500" fill="none" stroke="#969696"/></svg>
<div class="t" style="letter-spacing:-0.156px;left:206px;top:333px">liqk20w2.hzh</div>
<div class="t" style="letter-spacing:-0.319px;left:446px;top:333px;color:#6d6d6d">2/20/2018 3:02 PM</div>
<div class="t" style="letter-spacing:-0.293px;left:566px;top:333px;color:#6d6d6d">HZH File</div>
<div class="t" style="left:652px;width:100px;text-align:right;letter-spacing:-.5px;word-spacing:-1px;top:333px;color:#6d6d6d">1 KB</div>
<svg class="abs" style="left:188px;top:353px" width="13" height="16" viewBox="0 0 13 16"><path d="M.5.500h8l3.500 3.500v11.500H.5z" fill="#fff" stroke="#969696"/><path d="M8.500.500v3.500h3.500" fill="none" stroke="#969696"/></svg>
<div class="t" style="letter-spacing:-0.158px;left:206px;top:354px">lt43t10z.qdj</div>
<div class="t" style="letter-spacing:-0.168px;left:446px;top:354px;color:#6d6d6d">7/22/2023 1:11 AM</div>
<div class="t" style="letter-spacing:-0.709px;left:566px;top:354px;color:#6d6d6d">QDJ File</div>
<div class="t" style="left:652px;width:100px;text-align:right;letter-spacing:-.5px;word-spacing:-1px;top:354px;color:#6d6d6d">1 KB</div>
<svg class="abs" style="left:186px;top:375px" width="16" height="14" viewBox="0 0 16 14"><rect x=".5" y=".5" width="15" height="12" fill="#f4f4f4" stroke="#7d7d7d"/><rect x="1.500" y="1.500" width="13" height="2" fill="#dfe6ee"/><circle cx="7" cy="7.500" r="2.600" fill="none" stroke="#8a8f96" stroke-width="1.200"/><circle cx="10" cy="8.500" r="2" fill="none" stroke="#8a8f96" stroke-width="1.100"/></svg>
<div class="t" style="letter-spacing:0.019px;left:206px;top:375px">monthly-report-S3-2024.iso.bat</div>
<div class="t" style="letter-spacing:-0.339px;left:446px;top:375px;color:#6d6d6d">10/25/2024 9:41 PM</div>
<div class="t" style="letter-spacing:-0.188px;left:566px;top:375px;color:#6d6d6d">Windows Batch File</div>
<div class="t" style="left:652px;width:100px;text-align:right;letter-spacing:-.5px;word-spacing:-1px;top:375px;color:#6d6d6d">1,472 KB</div>
<svg class="abs" style="left:188px;top:395px" width="13" height="16" viewBox="0 0 13 16"><path d="M.5.500h8l3.500 3.500v11.500H.5z" fill="#fff" stroke="#969696"/><path d="M8.500.500v3.500h3.500" fill="none" stroke="#969696"/></svg>
<div class="t" style="letter-spacing:0.012px;left:206px;top:396px">prj4oitj.kr5</div>
<div class="t" style="letter-spacing:-0.221px;left:446px;top:396px;color:#6d6d6d">6/16/2017 5:28 AM</div>
<div class="t" style="letter-spacing:-0.752px;left:566px;top:396px;color:#6d6d6d">KR5 File</div>
<div class="t" style="left:652px;width:100px;text-align:right;letter-spacing:-.5px;word-spacing:-1px;top:396px;color:#6d6d6d">1 KB</div>
<svg class="abs" style="left:188px;top:416px" width="13" height="16" viewBox="0 0 13 16"><path d="M.5.500h8l3.500 3.500v11.500H.5z" fill="#fff" stroke="#969696"/><path d="M8.500.500v3.500h3.500" fill="none" stroke="#969696"/></svg>
<div class="t" style="letter-spacing:-0.196px;left:206px;top:417px">qumnr25p.sak</div>
<div class="t" style="letter-spacing:-0.339px;left:446px;top:417px;color:#6d6d6d">7/12/2023 10:49 PM</div>
<div class="t" style="letter-spacing:-0.711px;left:566px;top:417px;color:#6d6d6d">SAK File</div>
<div class="t" style="left:652px;width:100px;text-align:right;letter-spacing:-.5px;word-spacing:-1px;top:417px;color:#6d6d6d">1 KB</div>
<svg class="abs" style="left:188px;top:437px" width="13" height="16" viewBox="0 0 13 16"><path d="M.5.500h8l3.500 3.500v11.500H.5z" fill="#fff" stroke="#969696"/><path d="M8.500.500v3.500h3.500" fill="none" stroke="#969696"/></svg>
<div class="t" style="letter-spacing:-0.092px;left:206px;top:438px">rpfrul3h.rse</div>
<div class="t" style="letter-spacing:-0.221px;left:446px;top:438px;color:#6d6d6d">4/27/2022 4:23 AM</div>
<div class="t" style="letter-spacing:-1.043px;left:566px;top:438px;color:#6d6d6d">RSE File</div>
<div class="t" style="left:652px;width:100px;text-align:right;letter-spacing:-.5px;word-spacing:-1px;top:438px;color:#6d6d6d">1 KB</div>
<svg class="abs" style="left:188px;top:458px" width="13" height="16" viewBox="0 0 13 16"><path d="M.5.500h8l3.500 3.500v11.500H.5z" fill="#fff" stroke="#969696"/><path d="M8.500.500v3.500h3.500" fill="none" stroke="#969696"/></svg>
<div class="t" style="letter-spacing:-0.019px;left:206px;top:459px">svlbelxt.cpv</div>
<div class="t" style="letter-spacing:-0.221px;left:446px;top:459px;color:#6d6d6d">9/18/2022 9:44 AM</div>
<div class="t" style="letter-spacing:-0.668px;left:566px;top:459px;color:#6d6d6d">CPV File</div>
<div class="t" style="left:652px;width:100px;text-align:right;letter-spacing:-.5px;word-spacing:-1px;top:459px;color:#6d6d6d">1 KB</div>
<svg class="abs" style="left:188px;top:479px" width="13" height="16" viewBox="0 0 13 16"><path d="M.5.500h8l3.500 3.500v11.500H.5z" fill="#fff" stroke="#969696"/><path d="M8.500.500v3.500h3.500" fill="none" stroke="#969696"/></svg>
<div class="t" style="letter-spacing:-0.054px;left:206px;top:480px">u5unj3jf.vzu</div>
<div class="t" style="letter-spacing:-0.221px;left:446px;top:480px;color:#6d6d6d">1/21/2022 2:33 AM</div>
<div class="t" style="letter-spacing:-0.584px;left:566px;top:480px;color:#6d6d6d">VZU File</div>
<div class="t" style="left:652px;width:100px;text-align:right;letter-spacing:-.5px;word-spacing:-1px;top:480px;color:#6d6d6d">1 KB</div>
<svg class="abs" style="left:188px;top:500px" width="13" height="16" viewBox="0 0 13 16"><path d="M.5.500h8l3.500 3.500v11.500H.5z" fill="#fff" stroke="#969696"/><path d="M8.500.500v3.500h3.500" fill="none" stroke="#969696"/></svg>
<div class="t" style="letter-spacing:0.059px;left:206px;top:501px">vpbd5tix.far</div>
<div class="t" style="letter-spacing:-0.192px;left:446px;top:501px;color:#6d6d6d">8/1/2020 6:16 AM</div>
<div class="t" style="letter-spacing:-0.752px;left:566px;top:501px;color:#6d6d6d">FAR File</div>
<div class="t" style="left:652px;width:100px;text-align:right;letter-spacing:-.5px;word-spacing:-1px;top:501px;color:#6d6d6d">1 KB</div>
<svg class="abs" style="left:188px;top:521px" width="13" height="16" viewBox="0 0 13 16"><path d="M.5.500h8l3.500 3.500v11.500H.5z" fill="#fff" stroke="#969696"/><path d="M8.500.500v3.500h3.500" fill="none" stroke="#969696"/></svg>
<div class="t" style="letter-spacing:-0.201px;left:206px;top:522px">xb3dbbb1.4ke</div>
<div class="t" style="letter-spacing:-0.192px;left:446px;top:522px;color:#6d6d6d">8/1/2020 6:16 AM</div>
<div class="t" style="letter-spacing:-0.795px;left:566px;top:522px;color:#6d6d6d">4KE File</div>
<div class="t" style="left:652px;width:100px;text-align:right;letter-spacing:-.5px;word-spacing:-1px;top:522px;color:#6d6d6d">1 KB</div>
<svg class="abs" style="left:188px;top:542px" width="13" height="16" viewBox="0 0 13 16"><path d="M.5.500h8l3.500 3.500v11.500H.5z" fill="#fff" stroke="#969696"/><path d="M8.500.500v3.500h3.500" fill="none" stroke="#969696"/></svg>
<div class="t" style="letter-spacing:0.135px;left:206px;top:543px">xbjmxtad.doh</div>
<div class="t" style="letter-spacing:-0.246px;left:446px;top:543px;color:#6d6d6d">3/10/2020 12:55 AM</div>
<div class="t" style="letter-spacing:-0.355px;left:566px;top:543px;color:#6d6d6d">DOH File</div>
<div class="t" style="left:652px;width:100px;text-align:right;letter-spacing:-.5px;word-spacing:-1px;top:543px;color:#6d6d6d">1 KB</div>
<svg class="abs" style="left:188px;top:563px" width="13" height="16" viewBox="0 0 13 16"><path d="M.5.500h8l3.500 3.500v11.500H.5z" fill="#fff" stroke="#969696"/><path d="M8.500.500v3.500h3.500" fill="none" stroke="#969696"/></svg>
<div class="t" style="letter-spacing:-0.200px;left:206px;top:564px">xxyj21vf.02n</div>
<div class="t" style="letter-spacing:-0.267px;left:446px;top:564px;color:#6d6d6d">8/29/2021 9:11 PM</div>
<div class="t" style="letter-spacing:-0.461px;left:566px;top:564px;color:#6d6d6d">02N File</div>
<div class="t" style="left:652px;width:100px;text-align:right;letter-spacing:-.5px;word-spacing:-1px;top:564px;color:#6d6d6d">1 KB</div>
<svg class="abs" style="left:188px;top:584px" width="13" height="16" viewBox="0 0 13 16"><path d="M.5.500h8l3.500 3.500v11.500H.5z" fill="#fff" stroke="#969696"/><path d="M8.500.500v3.500h3.500" fill="none" stroke="#969696"/></svg>
<div class="t" style="letter-spacing:0.031px;left:206px;top:585px">yocgo3ki.wiv</div>
<div class="t" style="letter-spacing:-0.319px;left:446px;top:585px;color:#6d6d6d">10/8/2019 5:12 PM</div>
<div class="t" style="letter-spacing:-0.543px;left:566px;top:585px;color:#6d6d6d">WIV File</div>
<div class="t" style="left:652px;width:100px;text-align:right;letter-spacing:-.5px;word-spacing:-1px;top:585px;color:#6d6d6d">1 KB</div>
<svg class="abs" style="left:188px;top:605px" width="13" height="16" viewBox="0 0 13 16"><path d="M.5.500h8l3.500 3.500v11.500H.5z" fill="#fff" stroke="#969696"/><path d="M8.500.500v3.500h3.500" fill="none" stroke="#969696"/></svg>
<div class="t" style="letter-spacing:-0.204px;left:206px;top:606px">z0xlqlyz.th2</div>
<div class="t" style="letter-spacing:-0.221px;left:446px;top:606px;color:#6d6d6d">6/5/2020 12:23 AM</div>
<div class="t" style="letter-spacing:-0.543px;left:566px;top:606px;color:#6d6d6d">TH2 File</div>
<div class="t" style="left:652px;width:100px;text-align:right;letter-spacing:-.5px;word-spacing:-1px;top:606px;color:#6d6d6d">1 KB</div>
<div class="abs" style="left:776px;top:237px;width:15px;height:388px;background:#f0f0f0"></div>
<div class="abs" style="left:776px;top:586px;width:15px;height:22px;background:#cdcdcd"></div>
<svg class="abs" style="left:776px;top:237px" width="15" height="388" viewBox="0 0 15 388" fill="none" stroke="#505050" stroke-width="1.900"><path d="M4 12l3.500-3.500 3.500 3.500M4 377.500l3.500 3.500 3.500-3.500"/></svg>

<!-- status bar -->
<div class="t" style="letter-spacing:-0.115px;left:22px;top:629px;color:#1e3287">265 items</div>
<div class="t" style="letter-spacing:-0.115px;left:94px;top:629px;color:#1e3287">1 item selected</div>
<div class="t" style="letter-spacing:-0.386px;left:179px;top:629px;color:#1e3287">1.43 MB</div>
<div class="abs" style="left:744px;top:625px;width:22px;height:23px;background:#c5e8fb;border:1px solid #3c9dd6"></div>
<svg class="abs" style="left:744px;top:625px" width="48" height="23" viewBox="0 0 48 23">
<g fill="#fff" stroke="#b0554a" stroke-width=".8"><rect x="4.500" y="5.500" width="3" height="3"/><rect x="4.500" y="9.500" width="3" height="3"/><rect x="4.500" y="13.500" width="3" height="3"/></g>
<path d="M10 7h3M15 7h3M10 11h3M15 11h3M10 15h3M15 15h3" stroke="#555" stroke-width="1"/>
<rect x="26.500" y="5.500" width="13" height="10" fill="#fff" stroke="#8a8a8a"/><rect x="28" y="7" width="10" height="7" fill="#5a86b5"/><path d="M28 12l4-2 6 1v3H28z" fill="#2e4f78"/>
</svg>

</div></div>

<div id="task">
<!-- start -->
<svg class="abs" style="left:16px;top:11px" width="17" height="17" viewBox="0 0 17 17" fill="#fff"><path d="M0 2.300l6.900-1v6.700H0zM7.700 1.200L16.500 0v8H7.700zM0 8.800h6.900v6.700l-6.900-1zM7.700 8.800h8.800v8l-8.800-1.200z"/></svg>
<!-- search box -->
<div class="abs" style="left:48px;top:0;width:288px;height:40px;background:#f2f2f2;border-top:1px solid #d8d8d8;border-bottom:1px solid #bfbfbf"></div>
<svg class="abs" style="left:58px;top:9px" width="22" height="22" viewBox="0 0 22 22" fill="none" stroke="#222" stroke-width="1.400"><circle cx="13" cy="8" r="5.300"/><path d="M9.300 12L2.500 18.800"/></svg>
<div class="t" style="letter-spacing:-0.267px;left:88px;top:10px;font-size:15px;line-height:20px;height:20px;color:#333">Type here to search</div>
<!-- search highlight art -->
<svg class="abs" style="left:262px;top:1px" width="74" height="38" viewBox="0 0 74 38">
<ellipse cx="9" cy="23" rx="7" ry="7.500" fill="#ece3d8"/><ellipse cx="7" cy="22" rx="3.500" ry="5" fill="#f8f3ec"/><path d="M10 28c4 2 7 0 8-3" stroke="#cdbfae" stroke-width="1.500" fill="none"/>
<g transform="rotate(30 31.600 17.400)"><rect x="20.300" y="6.100" width="22.600" height="22.600" rx="2" fill="#f2bd18"/><rect x="23.300" y="9.100" width="16.600" height="16.600" rx="1.500" fill="#fbd84e"/><rect x="26" y="11.800" width="11.200" height="11.200" rx="1.200" fill="#f6ca34"/></g>
<g transform="translate(58 21) scale(1.180) translate(-58 -21.500)"><path d="M46 33c6-3 11-8 15-14" stroke="#7a5a3a" stroke-width="1.600" fill="none"/>
<path d="M52 27c-4-3-5-9-1-13 4 3 5 9 1 13z" fill="#2f8a3c"/><path d="M58 21c-1-5 2-10 7-11 2 5-1 10-7 11z" fill="#3fa14a"/><path d="M57 25c4-3 10-2 13 2-4 3-10 2-13-2z" fill="#2a7d36"/><path d="M49 31c2-4 7-5 10-3-2 4-6 5-10 3z" fill="#38943f"/>
</g>
</svg>
<!-- task view -->
<svg class="abs" style="left:351px;top:11px" width="18" height="18" viewBox="0 0 18 18" fill="none" stroke="#fff" stroke-width="1.300"><path d="M1.200 1v2.400h10.500V1M1.200 16.100v-2.600h10.500v2.600"/><rect x="1.200" y="5.200" width="10.500" height="6.500"/><path d="M15.500 1v2.600M15.500 8.600v7.500" stroke-width="1.400"/><rect x="14" y="4.800" width="3.200" height="3.200" fill="#fff" stroke="none"/></svg>
<!-- edge -->
<svg class="abs" style="left:399px;top:8px" width="25" height="24" viewBox="0 0 48.500 48.500">
<defs><linearGradient id="eg1" x1="0" y1=".3" x2="1" y2=".5"><stop offset="0" stop-color="#329fdc"/><stop offset=".45" stop-color="#42bcd2"/><stop offset=".8" stop-color="#62d25a"/><stop offset="1" stop-color="#7ade48"/></linearGradient><linearGradient id="eg2" x1="0" y1="0" x2=".3" y2="1"><stop offset="0" stop-color="#2c8ad8"/><stop offset=".5" stop-color="#1d66bc"/><stop offset="1" stop-color="#154c9a"/></linearGradient></defs>
<path d="M.8 26.500C.8 12 11 .5 24.500 .5 38 .5 47.500 10 47.500 20.500c0 7.500-5.500 13-12.500 13-5 0-7.200-2-7.200-3.300 0-1.200 2-2 2-5.700C29.800 19 24.500 13.500 17 13.500 8 13.500.8 20 .8 26.500z" fill="url(#eg1)"/>
<path d="M.8 26.500C.8 20 8 13.500 17 13.500c2 0 3.500.3 4.500.7-4 1.800-7 6.300-7 11.300C14.500 34 22 41 32 41c3.500 0 6.800-.8 9.500-2.400.8-.4 1.500.4 1 1.100-4 5.100-10.500 8.100-18 8.100C11 47.800.8 38 .8 26.500z" fill="url(#eg2)"/>
<path d="M14.500 25.500c0-5 3-9.500 7-11.300 1.500.6 3 1.600 4 2.800-3 1.500-5 4.500-5 8 0 7 6 13.500 15 13.500 2 0 4-.3 5.800-1-2.800 2.200-6 3.500-9.800 3.500-10 0-17-7-17-15.500z" fill="#2f9ce6" opacity=".55"/>
</svg>
<!-- explorer -->
<svg class="abs" style="left:448px;top:10px" width="24" height="20" viewBox="0 0 24 20">
<path d="M0 1.500h8l2 2h14v3H0z" fill="#e9a93a"/><rect x="0" y="4" width="24" height="15" fill="#fbd363"/><rect x="0" y="4" width="24" height="2" fill="#fde28c"/>
<path d="M5 19v-7.500h14V19h-3.500v-4h-7v4z" fill="#3f8fd8"/><rect x="8.500" y="15" width="7" height="4" fill="#2b6fb8"/>
</svg>
<div class="abs" style="left:440px;top:38px;width:40px;height:2px;background:#76b9ed"></div>
<!-- firefox -->
<svg class="abs" style="left:496px;top:7px" width="26" height="26" viewBox="0 0 26 26">
<defs><radialGradient id="ff1" cx=".65" cy=".2" r=".9"><stop offset="0" stop-color="#ffe14a"/><stop offset=".4" stop-color="#ff9a2a"/><stop offset=".8" stop-color="#f0364e"/><stop offset="1" stop-color="#d61f6a"/></radialGradient></defs>
<path d="M13 4c1-2 3-3.500 4-4 .5 2 2 3.500 4 5.500 2.500 2.500 4 5 4 8.500A12 12 0 0 1 1 14c0-3 1-5.500 2.500-7 0 1.500.5 2.500 1 3 .5-2.500 2-4.500 4-5.500 1.500-.8 3-.8 4.500-.5z" fill="url(#ff1)"/>
<circle cx="13.500" cy="15" r="6" fill="#7b3fd0"/><circle cx="14" cy="14" r="4" fill="#9a5cf0"/>
<path d="M7 12c1-2 3-2.500 5-2-2 .5-2.500 2-2 3.500.5 2 3 3 5.500 2-1 2.500-4 3.500-6.500 2.500S6 14 7 12z" fill="#ff9a2a"/>
</svg>
<!-- notepad-like -->
<svg class="abs" style="left:546px;top:7px" width="24" height="26" viewBox="0 0 24 26">
<defs><linearGradient id="np1" x1="0" y1="0" x2="0" y2="1"><stop offset="0" stop-color="#fbfcf6"/><stop offset=".4" stop-color="#f0f6dc"/><stop offset=".62" stop-color="#b4d670"/><stop offset="1" stop-color="#62aa2a"/></linearGradient></defs>
<rect x="1" y="2" width="18" height="23" fill="url(#np1)" stroke="#4f7f24" stroke-width=".8"/>
<path d="M5 8v9M4 8h2M4 17h2M9 12h1.500M12 12h1.500M15 12h1.500" stroke="#254018" stroke-width="1.200"/>
<path d="M22 1l1.500 1.500-9 13-2.500 1.500.5-2.800z" fill="#e8c23a" stroke="#a8861a" stroke-width=".5"/>
</svg>
<div class="abs" style="left:538px;top:38px;width:40px;height:2px;background:#76b9ed"></div>
<!-- tray -->
<svg class="abs" style="left:1068px;top:8px" width="200" height="26" viewBox="0 0 200 26" fill="none" stroke="#fff" stroke-width="1.200">
<path d="M5 15l6-6 6 6"/>
<rect x="30.600" y="8.600" width="7.800" height="7.800" rx="1.500"/><path d="M38.400 11.500l2.600-1.500v5l-2.600-1.500"/><path d="M30 6.500a6.500 6.500 0 0 1 9 0M30 18.500a6.500 6.500 0 0 0 9 0"/>
<rect x="55.600" y="6.600" width="10.800" height="7.800"/><path d="M58 18.500h6M61 14.500v4"/><rect x="51.600" y="6.600" width="3" height="3" fill="#04151f"/><path d="M53 9.600V18.500h3"/>
<path d="M76 10.500h2.500l3.500-3.500v12l-3.500-3.500H76z"/><path d="M84.500 10.500a3.500 3.500 0 0 1 0 5M86.800 8.300a6.500 6.500 0 0 1 0 9.400M89 6.300a9.500 9.500 0 0 1 0 13.400" stroke-width="1"/>
<path d="M171.600 4.600h14.800v10.800h-4.400l-3 3-3-3h-4.400z"/>
</svg>
<div class="t" style="letter-spacing:-0.243px;left:1173.500px;top:3px;color:#fff;font-size:12px">9:44 PM</div>
<div class="t" style="letter-spacing:-0.306px;left:1166.500px;top:21px;color:#fff;font-size:12px">10/25/2024</div>
<div class="abs" style="left:1275px;top:0;width:1px;height:40px;background:#6a6f76"></div>
</div>

</body>
</html>
